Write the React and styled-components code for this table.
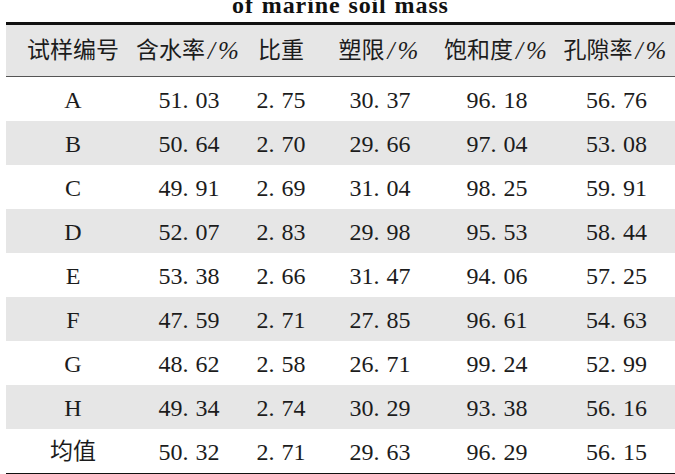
import React from "react";
import styled, { createGlobalStyle } from "styled-components";

const Global = createGlobalStyle`
  html, body { margin: 0; padding: 0; background: #fff; overflow: hidden; }
  body { width: 675px; height: 474px; }
`;

const Page = styled.div`
  width: 675px;
  height: 474px;
  overflow: hidden;
  font-family: "Liberation Serif", "Noto Sans CJK SC", serif;
  color: #1c1c1c;
`;

const TitleClip = styled.div`
  height: 22px;
  overflow: hidden;
  display: flex;
  justify-content: center;
  padding-left: 6px;
`;

const Title = styled.div`
  margin-top: -5px;
  font-family: "Liberation Serif", serif;
  font-weight: bold;
  font-size: 24px;
  line-height: 20px;
  letter-spacing: 0.9px;
  word-spacing: 1px;
  color: #111;
  white-space: nowrap;
`;

const Table = styled.div`
  margin-left: 6px;
  width: 675px;
  border-top: 3px solid #111;
  border-bottom: 3px solid #111;
`;

const Grid = styled.div`
  display: grid;
  grid-template-columns: 134px 98px 86px 112px 122px 117px 6px;
  height: ${(p) => p.$h}px;
  background: ${(p) => (p.$shade ? "#e6e6e6" : "#ffffff")};
  border-bottom: ${(p) => (p.$rule ? "1px solid #555" : "none")};
`;

const Cell = styled.div`
  display: flex;
  align-items: center;
  justify-content: center;
  white-space: nowrap;
  font-size: ${(p) => (p.$head ? 23 : 24)}px;
  line-height: 1;
  padding-top: ${(p) => (p.$head ? 0 : 1)}px;
`;

const Unit = styled.span`
  font-family: "Liberation Serif", serif;
  font-style: italic;
  font-size: 25px;
  letter-spacing: 3px;
  margin-left: 3px;
`;

const Frac = styled.span`
  padding-left: 7px;
`;

const head = [
  { t: "试样编号" },
  { t: "含水率", u: true },
  { t: "比重" },
  { t: "塑限", u: true },
  { t: "饱和度", u: true },
  { t: "孔隙率", u: true },
];

const rows = [
  ["A", "51.03", "2.75", "30.37", "96.18", "56.76"],
  ["B", "50.64", "2.70", "29.66", "97.04", "53.08"],
  ["C", "49.91", "2.69", "31.04", "98.25", "59.91"],
  ["D", "52.07", "2.83", "29.98", "95.53", "58.44"],
  ["E", "53.38", "2.66", "31.47", "94.06", "57.25"],
  ["F", "47.59", "2.71", "27.85", "96.61", "54.63"],
  ["G", "48.62", "2.58", "26.71", "99.24", "52.99"],
  ["H", "49.34", "2.74", "30.29", "93.38", "56.16"],
  ["均值", "50.32", "2.71", "29.63", "96.29", "56.15"],
];

function Num({ v }) {
  const [a, b] = v.split(".");
  return (
    <>
      {a}.<Frac>{b}</Frac>
    </>
  );
}

export default function App() {
  return (
    <Page>
      <Global />
      <TitleClip>
        <Title>of marine soil mass</Title>
      </TitleClip>
      <Table>
        <Grid $h={51} $shade $rule>
          {head.map((h) => (
            <Cell $head key={h.t}>
              {h.t}
              {h.u && <Unit>/%</Unit>}
            </Cell>
          ))}
          <Cell />
        </Grid>
        {rows.map((r, i) => (
          <Grid key={r[0]} $h={44} $shade={i % 2 === 1}>
            <Cell $head={i === 8}>{r[0]}</Cell>
            {r.slice(1).map((v, j) => (
              <Cell key={j}>
                <Num v={v} />
              </Cell>
            ))}
            <Cell />
          </Grid>
        ))}
      </Table>
    </Page>
  );
}
